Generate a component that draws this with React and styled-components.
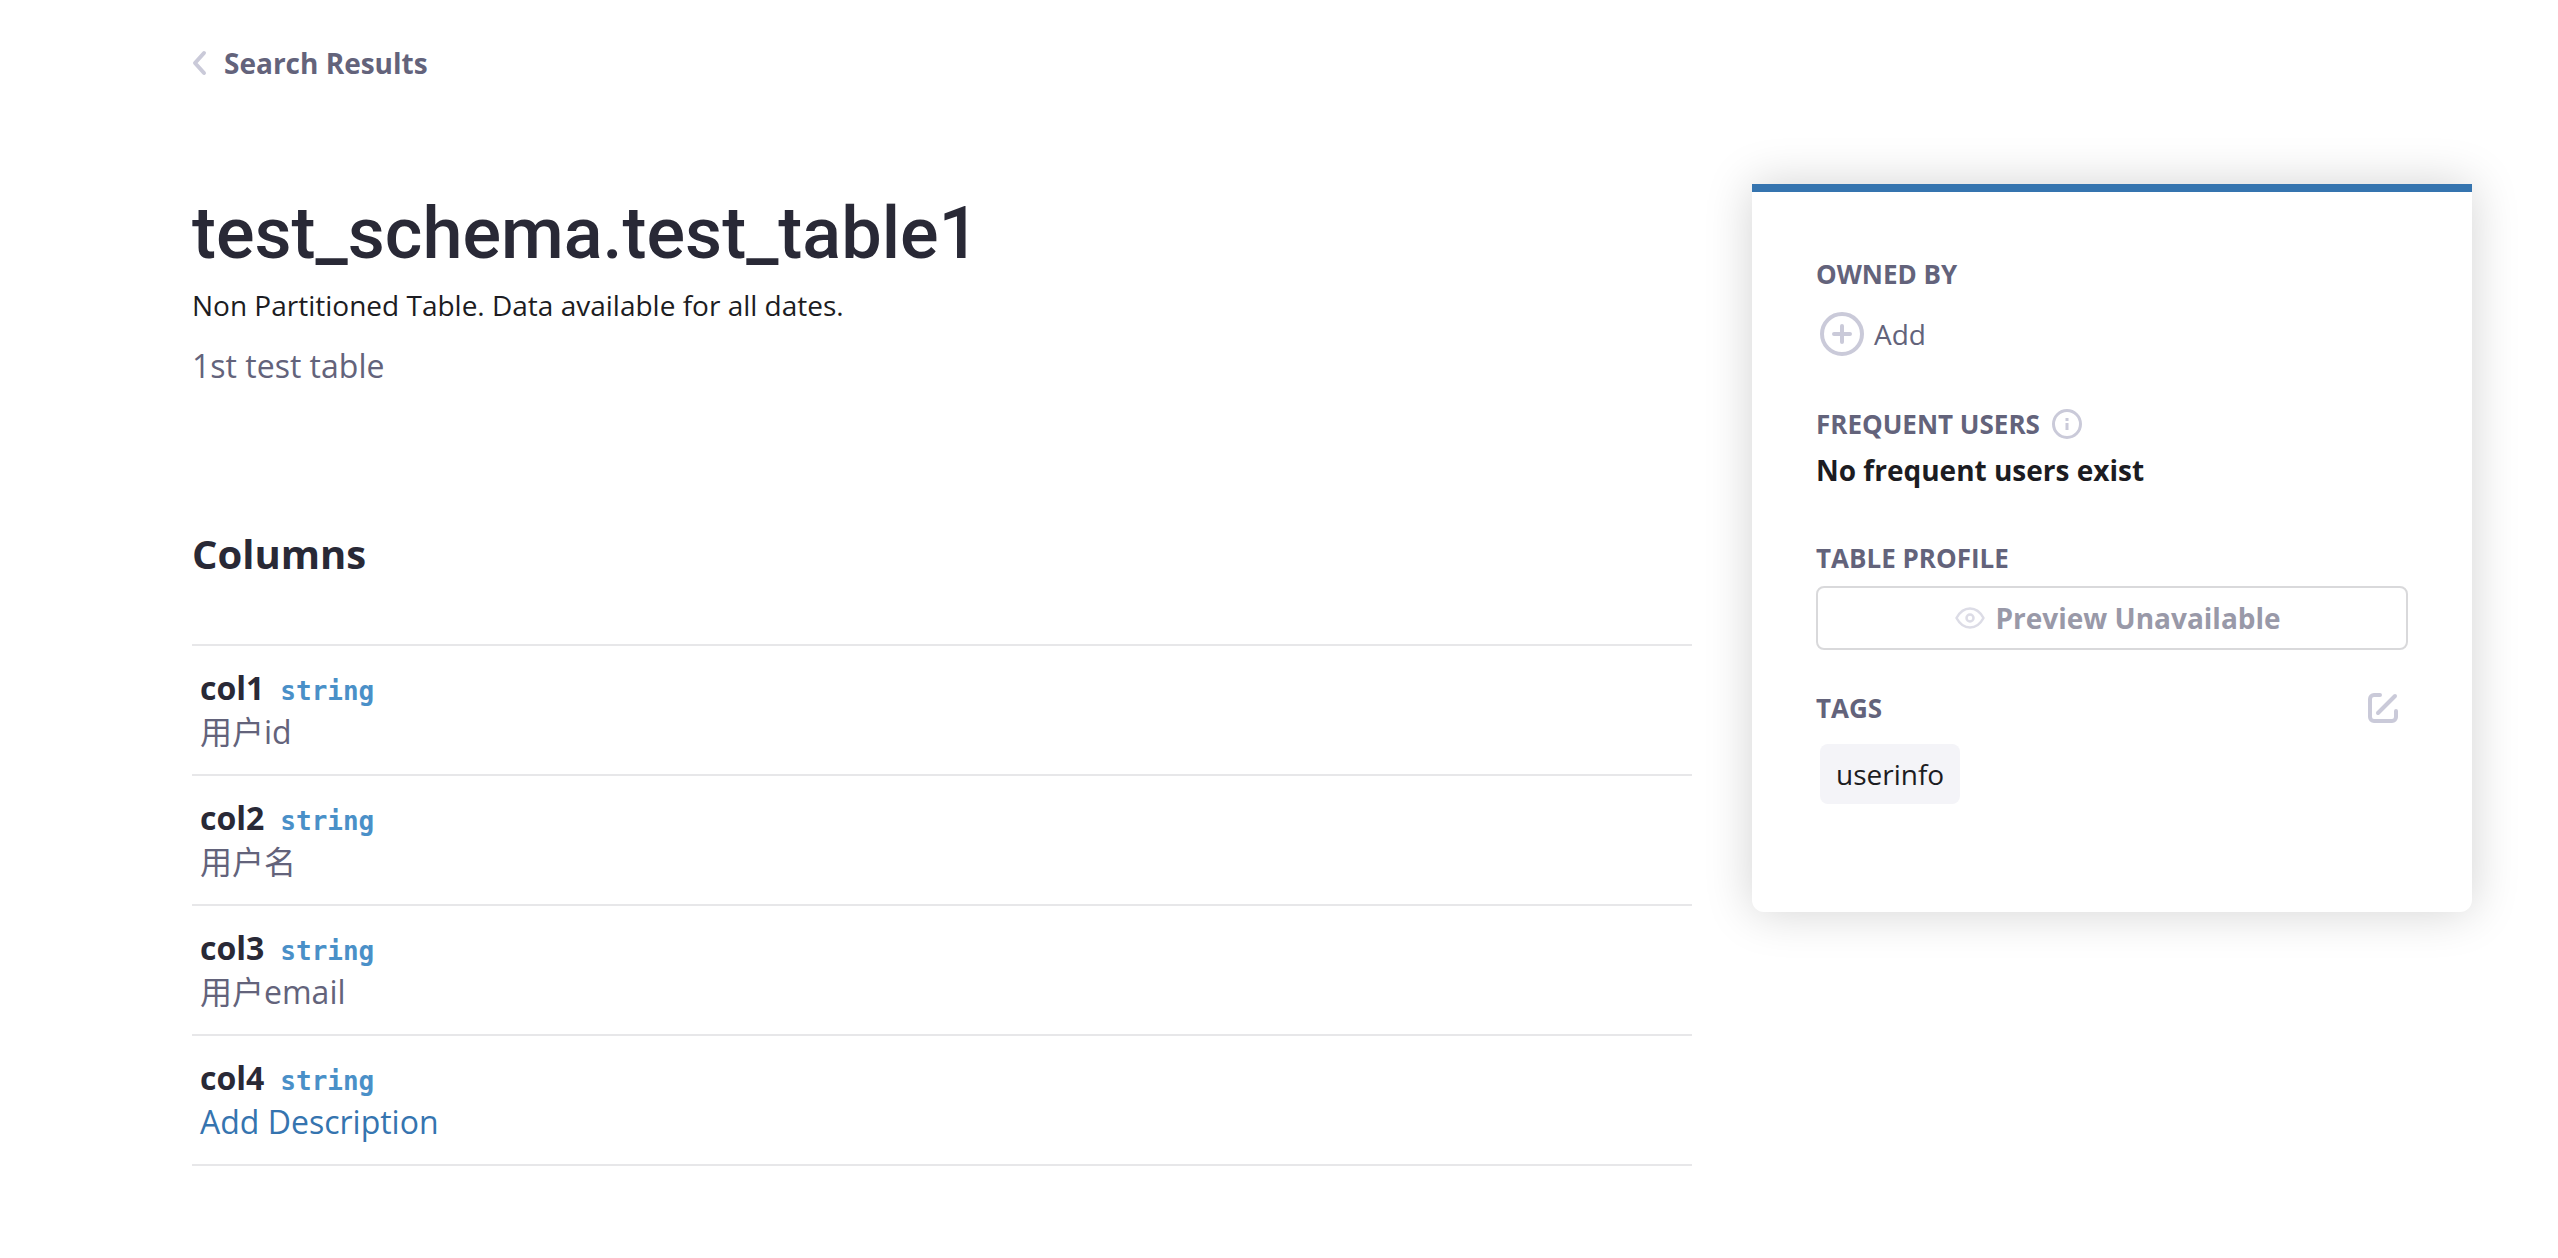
import styled, { createGlobalStyle } from 'styled-components'

const colors = {
  text: '#292936',
  body: '#1c1c22',
  muted: '#63637b',
  icon: '#cacad9',
  link: '#3574af',
  type: '#4a90c8',
  stroke: '#e7e7e9',
  tag: '#f4f4f8',
}

const columns = [
  { name: 'col1', type: 'string', description: '用户id' },
  { name: 'col2', type: 'string', description: '用户名' },
  { name: 'col3', type: 'string', description: '用户email' },
  { name: 'col4', type: 'string' },
]

const tags = ['userinfo']

const GlobalStyle = createGlobalStyle`
  * {
    box-sizing: border-box;
  }

  body {
    margin: 0;
    background-color: #ffffff;
    color: ${colors.body};
    font-family: 'Open Sans', 'Noto Sans CJK SC', sans-serif;
    font-size: 28px;
    line-height: 40px;
  }

  h1, h2, h3, p, ul {
    margin: 0;
    padding: 0;
  }
`

export default function App() {
  return (
    <Page>
      <GlobalStyle />
      <Breadcrumb href="#search">
        <LeftIcon />
        Search Results
      </Breadcrumb>
      <Layout>
        <main>
          <Title>test_schema.test_table1</Title>
          <p>Non Partitioned Table. Data available for all dates.</p>
          <Description>1st test table</Description>
          <SectionTitle>Columns</SectionTitle>
          <ColumnList>
            {columns.map((column) => (
              <ColumnItem key={column.name}>
                <ColumnHeader>
                  <ColumnName>{column.name}</ColumnName>
                  <ColumnType>{column.type}</ColumnType>
                </ColumnHeader>
                {column.description ? (
                  <ColumnText>{column.description}</ColumnText>
                ) : (
                  <AddDescription type="button">Add Description</AddDescription>
                )}
              </ColumnItem>
            ))}
          </ColumnList>
        </main>
        <Card>
          <CardSection>
            <CardTitle>OWNED BY</CardTitle>
            <AddOwner type="button">
              <PlusIcon />
              Add
            </AddOwner>
          </CardSection>
          <CardSection>
            <CardTitle>
              FREQUENT USERS
              <InfoIcon />
            </CardTitle>
            <Strong>No frequent users exist</Strong>
          </CardSection>
          <CardSection>
            <CardTitle>TABLE PROFILE</CardTitle>
            <PreviewButton type="button" disabled>
              <EyeIcon />
              Preview Unavailable
            </PreviewButton>
          </CardSection>
          <CardSection $compact>
            <TagsHeader>
              <CardTitle>TAGS</CardTitle>
              <EditButton type="button" aria-label="Edit tags">
                <EditIcon />
              </EditButton>
            </TagsHeader>
            {tags.map((tag) => (
              <Tag key={tag} href="#tag">{tag}</Tag>
            ))}
          </CardSection>
        </Card>
      </Layout>
    </Page>
  )
}

const LeftIcon = () => (
  <Icon width="16" height="26" viewBox="0 0 16 26" strokeWidth="4">
    <path d="M12 3 3 13l9 10" />
  </Icon>
)

const PlusIcon = () => (
  <Icon width="44" height="44" viewBox="0 0 44 44" strokeWidth="4">
    <circle cx="22" cy="22" r="20" />
    <path d="M22 14v16M14 22h16" />
  </Icon>
)

const InfoIcon = () => (
  <Icon width="30" height="30" viewBox="0 0 30 30" strokeWidth="3">
    <circle cx="15" cy="15" r="13.5" />
    <path d="M15 9v3M15 14v7" strokeLinecap="butt" />
  </Icon>
)

const EyeIcon = () => (
  <Icon width="30" height="22" viewBox="0 0 30 22" strokeWidth="2.5">
    <path d="M1.500 11C5 4.500 9.500 1.500 15 1.500S25 4.500 28.500 11C25 17.500 20.500 20.500 15 20.500S5 17.500 1.500 11z" />
    <circle cx="15" cy="11" r="3.500" />
  </Icon>
)

const EditIcon = () => (
  <Icon width="30" height="30" viewBox="0 0 30 30" strokeWidth="4">
    <path d="M12 2H6a4 4 0 0 0-4 4v18a4 4 0 0 0 4 4h18a4 4 0 0 0 4-4v-6" />
    <path d="M10 20 27 3" />
  </Icon>
)

const Page = styled.div`
  padding: 39px 86px 80px 192px;
`

const Icon = styled.svg`
  flex: none;
  fill: none;
  stroke: ${colors.icon};
  stroke-linecap: round;
  stroke-linejoin: round;
`

const Breadcrumb = styled.a`
  display: inline-flex;
  align-items: center;
  gap: 16px;
  height: 48px;
  color: ${colors.muted};
  font-weight: 700;
  text-decoration: none;
`

const Layout = styled.div`
  display: grid;
  grid-template-columns: minmax(0, 1fr) 720px;
  align-items: start;
  gap: 60px;
  margin-top: 97px;
`

const Title = styled.h1`
  margin: 2px 0 3px;
  color: ${colors.text};
  font-family: Roboto, sans-serif;
  font-size: 72px;
  font-weight: 500;
  line-height: 96px;
`

const Description = styled.p`
  margin-top: 21px;
  color: ${colors.muted};
  font-size: 32px;
`

const SectionTitle = styled.h2`
  margin-top: 140px;
  color: ${colors.text};
  font-size: 40px;
  font-weight: 700;
  line-height: 56px;
`

const ColumnList = styled.ul`
  margin-top: 62px;
  border-top: 2px solid ${colors.stroke};
  list-style: none;
`

const ColumnItem = styled.li`
  padding: 20px 8px;
  border-bottom: 2px solid ${colors.stroke};
`

const ColumnHeader = styled.div`
  display: flex;
  align-items: baseline;
  gap: 16px;
  height: 44px;
  line-height: 44px;
`

const ColumnName = styled.span`
  color: ${colors.text};
  font-size: 32px;
  font-weight: 700;
`

const ColumnType = styled.span`
  color: ${colors.type};
  font-family: 'DejaVu Sans Mono', monospace;
  font-size: 26px;
  font-weight: 700;
`

const ColumnText = styled.p`
  color: ${colors.muted};
  font-size: 32px;
  line-height: 44px;
`

const PlainButton = styled.button`
  display: flex;
  align-items: center;
  padding: 0;
  border: 0;
  background: none;
  font-family: inherit;
  cursor: pointer;
`

const AddDescription = styled(PlainButton)`
  color: ${colors.link};
  font-size: 32px;
  line-height: 44px;
`

const Card = styled.aside`
  min-height: 728px;
  padding: 62px 64px;
  border-top: 8px solid ${colors.link};
  border-radius: 0 0 12px 12px;
  background-color: #ffffff;
  box-shadow: 0 0 48px rgba(0, 0, 0, 0.18);
`

const CardSection = styled.section`
  margin-top: ${(props) => props.$compact ? 38 : 48}px;

  &:first-child {
    margin-top: 0;
  }
`

const CardTitle = styled.h3`
  display: flex;
  align-items: center;
  gap: 12px;
  color: ${colors.muted};
  font-size: 26px;
  font-weight: 700;
  line-height: 40px;
`

const AddOwner = styled(PlainButton)`
  gap: 10px;
  margin-top: 18px;
  padding-left: 4px;
  color: ${colors.muted};
  font-size: 28px;
`

const Strong = styled.p`
  margin-top: 6px;
  font-weight: 700;
`

const PreviewButton = styled.button`
  display: flex;
  align-items: center;
  justify-content: center;
  gap: 10px;
  width: 100%;
  height: 64px;
  margin-top: 8px;
  padding: 0 0 0 12px;
  border: 2px solid #c6c6c9;
  border-radius: 8px;
  background-color: #ffffff;
  color: ${colors.muted};
  font-family: inherit;
  font-size: 28px;
  font-weight: 700;
  opacity: 0.65;
`

const TagsHeader = styled.div`
  display: flex;
  align-items: center;
  justify-content: space-between;
`

const EditButton = styled(PlainButton)`
  padding-right: 10px;
`

const Tag = styled.a`
  display: inline-block;
  margin: 16px 4px;
  padding: 10px 16px;
  border-radius: 8px;
  background-color: ${colors.tag};
  color: ${colors.body};
  text-decoration: none;
`
